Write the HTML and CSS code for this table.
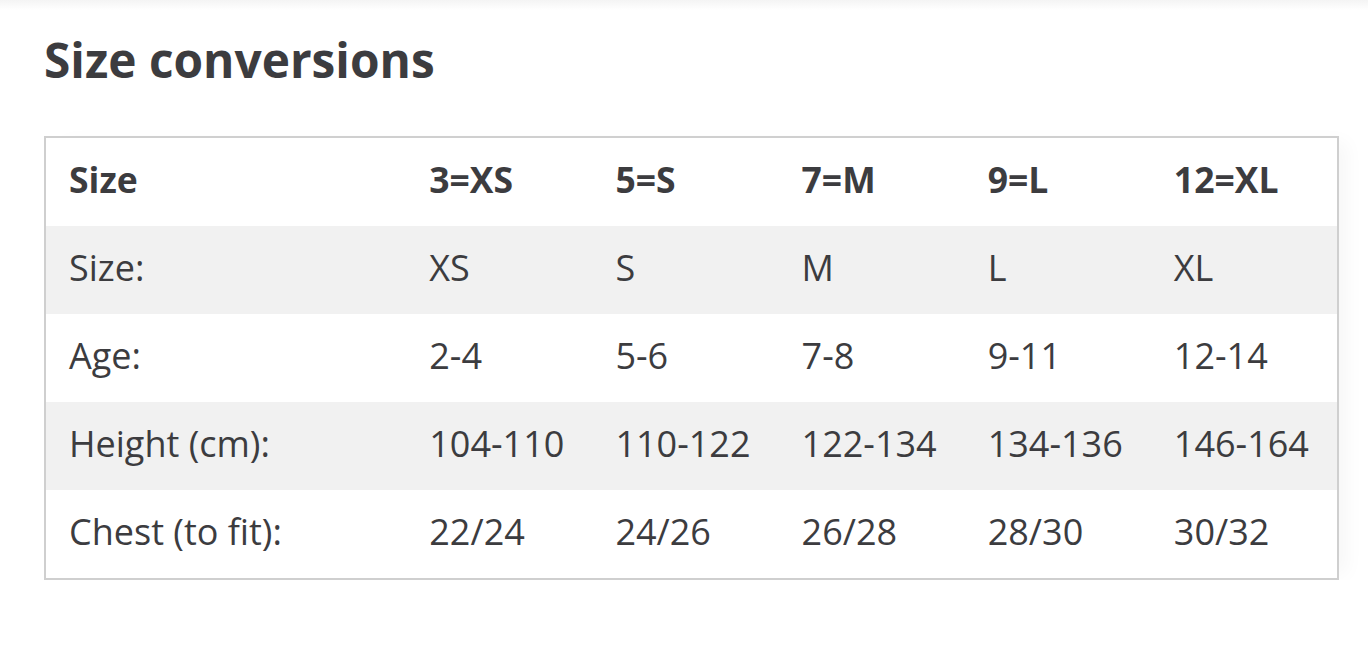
FILE: index.html
```html
<!DOCTYPE html>
<html>
<head>
<meta charset="utf-8">
<link rel="stylesheet" href="styles.css">
</head>
<body>
<div class="topbar"></div>
<main class="page">
  <h2 class="title">Size conversions</h2>
  <table class="sizes">
    <thead>
      <tr><th>Size</th><th>3=XS</th><th>5=S</th><th>7=M</th><th>9=L</th><th>12=XL</th></tr>
    </thead>
    <tbody>
      <tr class="alt"><td>Size:</td><td>XS</td><td>S</td><td>M</td><td>L</td><td>XL</td></tr>
      <tr><td>Age:</td><td>2-4</td><td>5-6</td><td>7-8</td><td>9-11</td><td>12-14</td></tr>
      <tr class="alt"><td>Height (cm):</td><td>104-110</td><td>110-122</td><td>122-134</td><td>134-136</td><td>146-164</td></tr>
      <tr><td>Chest (to fit):</td><td>22/24</td><td>24/26</td><td>26/28</td><td>28/30</td><td>30/32</td></tr>
    </tbody>
  </table>
</main>
</body>
</html>
```
FILE: styles.css
```css
html, body {
  margin: 0;
  padding: 0;
  background: #ffffff;
}
body {
  font-family: "Open Sans", "Liberation Sans", sans-serif;
  color: #3c3c3f;
}
.topbar {
  height: 10px;
  background: linear-gradient(#f4f4f4, #ffffff);
}
.page {
  padding: 0 0 0 44px;
}
.title {
  margin: 20px 0 0 0;
  font-size: 47.8px;
  line-height: 60px;
  font-weight: 700;
  letter-spacing: 0;
}
.sizes {
  margin-top: 46px;
  width: 1295px;
  border: 2px solid #cfcfcf;
  border-collapse: collapse;
  font-size: 36px;
  box-shadow: 14px 0 18px -6px rgba(0, 0, 0, 0.035);
}
.sizes th, .sizes td {
  text-align: left;
  padding: 0 0 6px 23px;
  height: 82px;
  vertical-align: middle;
  white-space: nowrap;
}
.sizes th {
  font-weight: 700;
  font-size: 35.5px;
}
.sizes th:first-child, .sizes td:first-child {
  width: 337px;
}
.sizes th:nth-child(n+2), .sizes td:nth-child(n+2) {
  width: 163px;
}
.sizes tr.alt td {
  background: #f1f1f1;
}
```
